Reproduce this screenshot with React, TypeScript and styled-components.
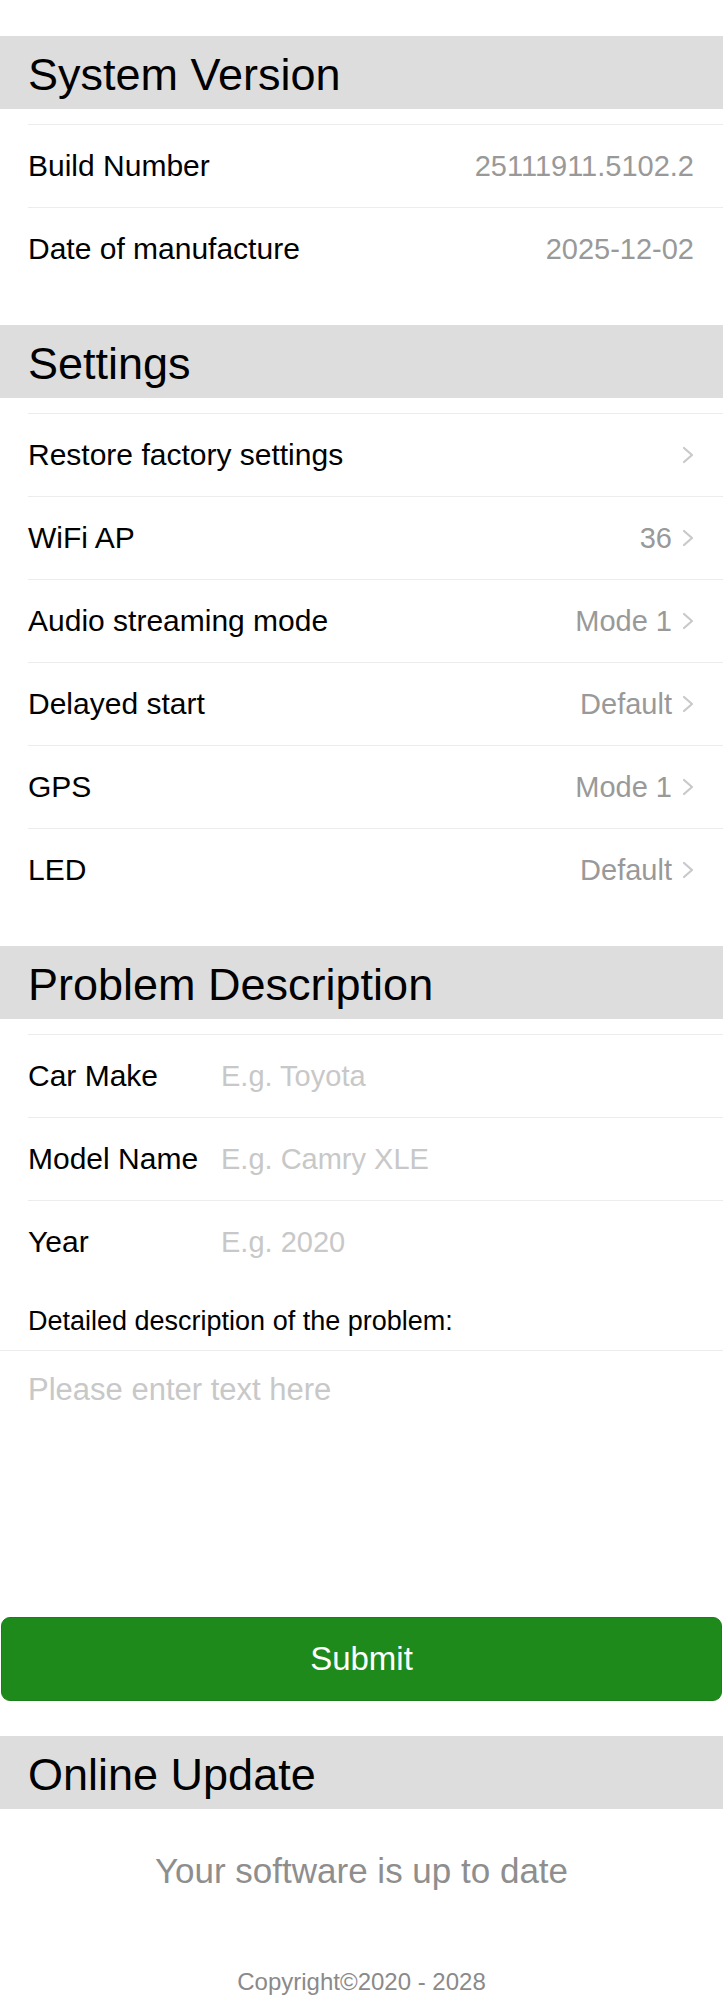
import React from 'react';
import styled, { createGlobalStyle } from 'styled-components';

type InfoItem = { label: string; value?: string; arrow?: boolean };

const versionItems: InfoItem[] = [
  { label: 'Build Number', value: '25111911.5102.2' },
  { label: 'Date of manufacture', value: '2025-12-02' },
];

const settingItems: InfoItem[] = [
  { label: 'Restore factory settings', arrow: true },
  { label: 'WiFi AP', value: '36', arrow: true },
  { label: 'Audio streaming mode', value: 'Mode 1', arrow: true },
  { label: 'Delayed start', value: 'Default', arrow: true },
  { label: 'GPS', value: 'Mode 1', arrow: true },
  { label: 'LED', value: 'Default', arrow: true },
];

const carFields = [
  { label: 'Car Make', placeholder: 'E.g. Toyota' },
  { label: 'Model Name', placeholder: 'E.g. Camry XLE' },
  { label: 'Year', placeholder: 'E.g. 2020' },
];

const Chevron = () => (
  <ChevronSvg width="12" height="18" viewBox="0 0 12 18">
    <polyline points="2,2 10,9 2,16" fill="none" stroke="#c9c9cc" strokeWidth="2.2" strokeLinecap="round" strokeLinejoin="round" />
  </ChevronSvg>
);

const App = () => {
  return (
    <Page>
      <GlobalStyle />
      <Section>
        <SectionTitle>System Version</SectionTitle>
        <List>
          {versionItems.map((item) => (
            <Row key={item.label}>
              <RowLabel>{item.label}</RowLabel>
              <RowValue>{item.value}</RowValue>
            </Row>
          ))}
        </List>
      </Section>

      <Section>
        <SectionTitle>Settings</SectionTitle>
        <List>
          {settingItems.map((item) => (
            <Row key={item.label} as="button" type="button">
              <RowLabel>{item.label}</RowLabel>
              <RowRight>
                {item.value && <RowValue>{item.value}</RowValue>}
                {item.arrow && <Chevron />}
              </RowRight>
            </Row>
          ))}
        </List>
      </Section>

      <Section>
        <SectionTitle>Problem Description</SectionTitle>
        <List>
          {carFields.map((field) => (
            <Row key={field.label}>
              <FieldLabel>{field.label}</FieldLabel>
              <FieldInput placeholder={field.placeholder} />
            </Row>
          ))}
        </List>
        <DetailLabel>Detailed description of the problem:</DetailLabel>
        <DetailArea placeholder="Please enter text here" />
        <SubmitButton type="button">Submit</SubmitButton>
      </Section>

      <Section>
        <SectionTitle>Online Update</SectionTitle>
        <UpdateStatus>Your software is up to date</UpdateStatus>
        <Copyright>Copyright©2020 - 2028</Copyright>
      </Section>
    </Page>
  );
};

const GlobalStyle = createGlobalStyle`
  body {
    margin: 0;
    background: #ffffff;
    font-family: "Liberation Sans", Arial, Helvetica, sans-serif;
  }
  * {
    box-sizing: border-box;
  }
`;

const Page = styled.div`
  padding-top: 36px;
  padding-bottom: 8px;
  width: 723px;
`;

const Section = styled.section`
  & + & {
    margin-top: 35px;
  }
`;

const SectionTitle = styled.h2`
  background: #dddddd;
  color: #000;
  font-size: 45px;
  font-weight: normal;
  height: 73px;
  line-height: 73px;
  margin: 0;
  padding: 2px 28px 0;
`;

const List = styled.div`
  margin-top: 15px;
`;

const Row = styled.div`
  align-items: center;
  background: none;
  border: none;
  border-top: 1px solid #ececec;
  display: flex;
  font: inherit;
  height: 83px;
  justify-content: space-between;
  margin-left: 28px;
  padding: 0 29px 0 0;
  text-align: left;
  width: calc(100% - 28px);
`;

const RowLabel = styled.span`
  color: #000;
  font-size: 30px;
`;

const RowRight = styled.span`
  align-items: center;
  display: flex;
  gap: 10px;
`;

const RowValue = styled.span`
  color: #999999;
  font-size: 29px;
`;

const ChevronSvg = styled.svg`
  display: block;
`;

const FieldLabel = styled.label`
  color: #000;
  flex: 0 0 193px;
  font-size: 30px;
`;

const FieldInput = styled.input`
  background: none;
  border: none;
  color: #000;
  flex: 1;
  font-family: inherit;
  font-size: 29px;
  outline: none;
  padding: 0;
  &::placeholder {
    color: #c8c8c8;
  }
`;

const DetailLabel = styled.div`
  color: #000;
  font-size: 27px;
  height: 67px;
  padding: 23px 28px 0;
`;

const DetailArea = styled.textarea`
  border: none;
  border-top: 1px solid #ececec;
  color: #000;
  display: block;
  font-family: inherit;
  font-size: 31px;
  height: 267px;
  outline: none;
  padding: 21px 28px;
  resize: none;
  width: 100%;
  &::placeholder {
    color: #c8c8c8;
  }
`;

const SubmitButton = styled.button`
  background: #1e8a1c;
  border: 1px solid #1a7f19;
  border-radius: 9px;
  color: #ffffff;
  cursor: pointer;
  display: block;
  font-family: inherit;
  font-size: 33px;
  height: 84px;
  margin: 0 1px;
  width: calc(100% - 2px);
`;

const UpdateStatus = styled.p`
  color: #8e8e8e;
  font-size: 35px;
  margin: 42px 0 0;
  text-align: center;
`;

const Copyright = styled.p`
  color: #8a8a8a;
  font-size: 24px;
  margin: 77px 0 0;
  text-align: center;
`;

export default App;
